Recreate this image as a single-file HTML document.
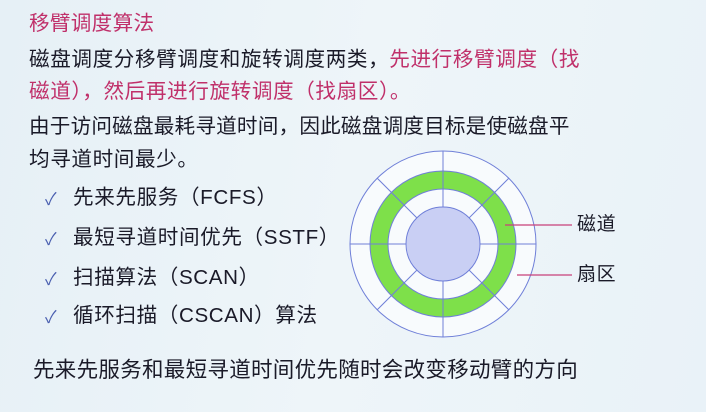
<!DOCTYPE html>
<html><head><meta charset="utf-8"><style>
html,body{margin:0;padding:0}
body{width:706px;height:412px;overflow:hidden;background:linear-gradient(100deg,#e6f0f6 0%,#eef5f9 50%,#e9f2f8 100%);font-family:"Liberation Sans","Noto Sans CJK SC",sans-serif;color:#1a1a28;position:relative}
.t{position:absolute;white-space:nowrap;font-size:20.6px;line-height:24px;letter-spacing:0.6px}
.r{color:#c0306a}
.ck{position:absolute;color:#4a5fb0;font-size:17px}
</style></head><body>
<div class="t r" style="left:29px;top:12px;letter-spacing:0.3px">移臂调度算法</div>
<div class="t" style="left:29px;top:48px">磁盘调度分移臂调度和旋转调度两类，<span class="r">先进行移臂调度（找</span></div>
<div class="t r" style="left:29px;top:80px">磁道），然后再进行旋转调度（找扇区）。</div>
<div class="t" style="left:29px;top:115px;letter-spacing:0.2px">由于访问磁盘最耗寻道时间，因此磁盘调度目标是使磁盘平</div>
<div class="t" style="left:29px;top:148px">均寻道时间最少。</div>
<div class="ck" style="left:45px;top:185px">✓</div><div class="t" style="left:73px;top:186px">先来先服务（FCFS）</div>
<div class="ck" style="left:45px;top:225px">✓</div><div class="t" style="left:73px;top:226px">最短寻道时间优先（SSTF）</div>
<div class="ck" style="left:45px;top:265px">✓</div><div class="t" style="left:73px;top:266px">扫描算法（SCAN）</div>
<div class="ck" style="left:45px;top:303px">✓</div><div class="t" style="left:73px;top:304px">循环扫描（CSCAN）算法</div>
<div class="t" style="left:33px;top:358px;font-size:21.5px;letter-spacing:0.3px">先来先服务和最短寻道时间优先随时会改变移动臂的方向</div>
<svg style="position:absolute;left:0;top:0" width="706" height="412">
<g transform="translate(443,244)" stroke="#6f7fd8" stroke-width="1">
<circle r="93" fill="#f8fbfd"/>
<circle r="73" fill="#7ee04a"/>
<circle r="55" fill="#f8fbfd"/>
<circle r="37" fill="#c9cff4"/>
<g>
<line x1="0" y1="-37" x2="0" y2="-93"/><line x1="0" y1="37" x2="0" y2="93"/>
<line x1="37" y1="0" x2="93" y2="0"/><line x1="-37" y1="0" x2="-93" y2="0"/>
<line x1="26" y1="-26" x2="66" y2="-66"/><line x1="-26" y1="-26" x2="-66" y2="-66"/>
<line x1="26" y1="26" x2="66" y2="66"/><line x1="-26" y1="26" x2="-66" y2="66"/>
</g></g>
<line x1="505" y1="225" x2="572" y2="225" stroke="#c8407a" stroke-width="1.2"/>
<line x1="517" y1="275" x2="572" y2="275" stroke="#c8407a" stroke-width="1.2"/>
</svg>
<div class="t" style="left:577px;top:213px;font-size:19px">磁道</div>
<div class="t" style="left:577px;top:263px;font-size:19px">扇区</div>
</body></html>
